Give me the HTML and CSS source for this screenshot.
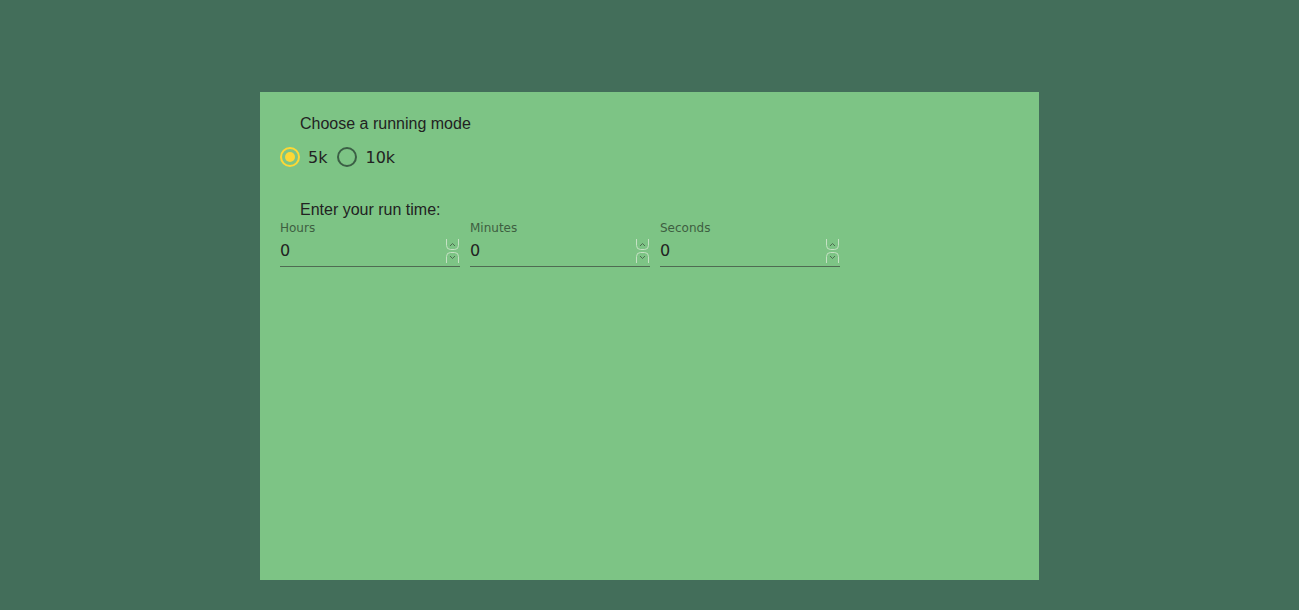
FILE: index.html
```html
<!DOCTYPE html>
<html>
<head>
<meta charset="utf-8">
<link rel="stylesheet" href="styles.css">
</head>
<body>
<div class="card">
  <h2 class="title">Choose a running mode</h2>
  <div class="radios">
    <label class="radio"><span class="dot on"></span><span class="rlabel">5k</span></label>
    <label class="radio"><span class="dot"></span><span class="rlabel">10k</span></label>
  </div>
  <h2 class="title title2">Enter your run time:</h2>
  <div class="fields">
    <div class="field"><label class="flabel">Hours</label>
      <div class="inwrap"><input class="finput" type="number" value="0">
        <svg class="spin" width="15" height="26" viewBox="0 0 15 26"><path d="M1.5 1v6.5q0 4 4 4h4q4 0 4-4V1" fill="none" stroke="#c6e2c4" stroke-width="1"/><path d="M1.5 25v-6.5q0-4 4-4h4q4 0 4 4V25" fill="none" stroke="#c6e2c4" stroke-width="1"/><path d="M5 8l2.5-2.5L10 8" fill="none" stroke="#4d6b50" stroke-width="1"/><path d="M5 18l2.5 2.5L10 18" fill="none" stroke="#4d6b50" stroke-width="1"/></svg>
      </div></div>
    <div class="field"><label class="flabel">Minutes</label>
      <div class="inwrap"><input class="finput" type="number" value="0">
        <svg class="spin" width="15" height="26" viewBox="0 0 15 26"><path d="M1.5 1v6.5q0 4 4 4h4q4 0 4-4V1" fill="none" stroke="#c6e2c4" stroke-width="1"/><path d="M1.5 25v-6.5q0-4 4-4h4q4 0 4 4V25" fill="none" stroke="#c6e2c4" stroke-width="1"/><path d="M5 8l2.5-2.5L10 8" fill="none" stroke="#4d6b50" stroke-width="1"/><path d="M5 18l2.5 2.5L10 18" fill="none" stroke="#4d6b50" stroke-width="1"/></svg>
      </div></div>
    <div class="field"><label class="flabel">Seconds</label>
      <div class="inwrap"><input class="finput" type="number" value="0">
        <svg class="spin" width="15" height="26" viewBox="0 0 15 26"><path d="M1.5 1v6.5q0 4 4 4h4q4 0 4-4V1" fill="none" stroke="#c6e2c4" stroke-width="1"/><path d="M1.5 25v-6.5q0-4 4-4h4q4 0 4 4V25" fill="none" stroke="#c6e2c4" stroke-width="1"/><path d="M5 8l2.5-2.5L10 8" fill="none" stroke="#4d6b50" stroke-width="1"/><path d="M5 18l2.5 2.5L10 18" fill="none" stroke="#4d6b50" stroke-width="1"/></svg>
      </div></div>
  </div>
</div>
</body>
</html>
```
FILE: styles.css
```css
html, body { margin: 0; padding: 0; }
body {
  background: #436e5a;
  height: 610px;
  padding-top: 92px;
  box-sizing: border-box;
}
.card {
  width: 779px;
  height: 488px;
  margin-left: 260px;
  background: #7dc485;
  padding: 23px 20px 0 20px;
  box-sizing: border-box;
}
.title {
  font-family: "Liberation Sans", Arial, sans-serif;
  font-size: 16px;
  font-weight: normal;
  color: #222;
  margin: 0 0 0 20px;
  line-height: 18px;
}
.title2 { margin-top: 32px; }
.radios {
  display: flex;
  gap: 10px;
  margin-top: 12px;
  height: 24px;
  align-items: center;
}
.radio { display: flex; align-items: center; gap: 8px; }
.dot {
  width: 20px; height: 20px;
  border-radius: 50%;
  border: 2px solid #3b5f45;
  box-sizing: border-box;
  display: flex; align-items: center; justify-content: center;
}
.dot.on { border-color: #fdd835; }
.dot.on::after {
  content: "";
  width: 10px; height: 10px; border-radius: 50%;
  background: #fdd835;
}
.rlabel {
  font-family: "DejaVu Sans", sans-serif;
  font-size: 16px;
  color: #222;
}
.fields { display: flex; gap: 10px; margin-top: 1px; }
.field { width: 180px; display: flex; flex-direction: column; }
.flabel {
  font-family: "DejaVu Sans", sans-serif;
  font-size: 12px;
  color: #3d5e41;
  line-height: 16px;
}
.inwrap { position: relative; }
.finput {
  font-family: "DejaVu Sans", sans-serif;
  font-size: 16px;
  color: #222;
  background: transparent;
  border: none;
  border-bottom: 1px solid #4f6b52;
  padding: 3px 0 4px 0;
  margin: 0;
  width: 100%;
  box-sizing: border-box;
  outline: none;
  height: 31px;
  -moz-appearance: textfield;
}
.finput::-webkit-inner-spin-button,
.finput::-webkit-outer-spin-button { -webkit-appearance: none; margin: 0; }
.spin { position: absolute; right: 0; top: 2px; }
```
